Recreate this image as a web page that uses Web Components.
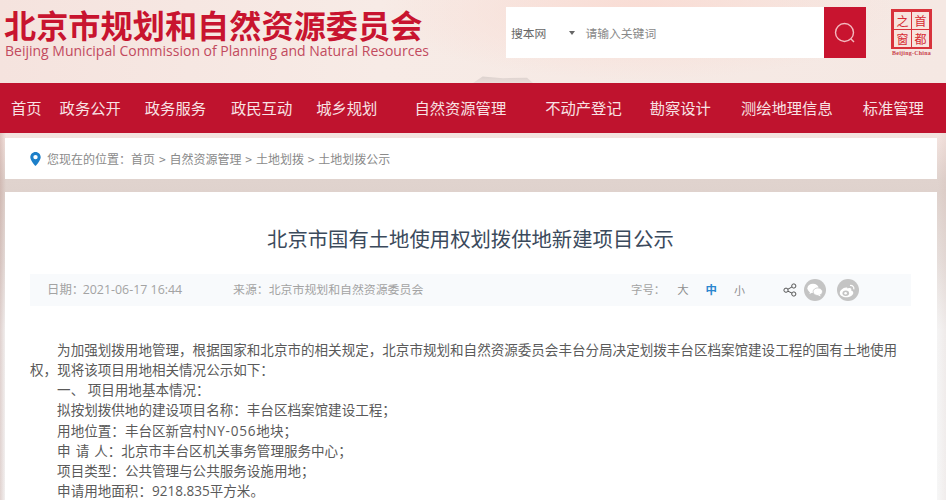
<!DOCTYPE html>
<html lang="zh">
<head>
<meta charset="utf-8">
<style>
html,body{margin:0;padding:0}
body{width:946px;height:500px;overflow:hidden;font-family:"Noto Sans CJK SC","Noto Sans",sans-serif;
background:
linear-gradient(90deg,rgba(170,120,110,.28),rgba(255,255,255,0) 6px,rgba(255,255,255,0) 938px,rgba(180,130,120,.08)),
linear-gradient(180deg,#f6e6e1 0,#f5e4df 80px,#f3e3df 136px,#e0d3ce 180px,#dfd2cd 192px,#e6dedb 260px,#f4f3f3 330px,#f6f6f6 500px)}
</style>
</head>
<body>
<template id="t-header">
<style>
:host{display:flex;height:83px;box-sizing:border-box;position:relative;overflow:hidden;
background:radial-gradient(ellipse 260px 70px at 640px 10px,#f9dcd4,rgba(249,220,212,0)),linear-gradient(90deg,#f5e3de,#f7ebe6 40%,#f5e8e3)}
.brand{width:506px;padding:8px 0 0 4px;box-sizing:border-box;flex:none}
.cn{font:700 32.2px/33px "Noto Sans CJK SC",sans-serif;color:#c8142f;white-space:nowrap}
.en{font:14px/18px "Open Sans",sans-serif;color:#c24a5e;margin:1px 0 0 1px;white-space:nowrap}
.slot{margin-top:7px;flex:none}
.logo{margin:9px 0 0 25px;flex:none;width:41px}
.hill{position:absolute;left:473px;top:75px;width:60px;height:8px;background:linear-gradient(180deg,#d8cfcb,#ebdeda);clip-path:polygon(0 100%,16% 20%,50% 40%,90% 35%,100% 100%)}
</style>
<div class="brand"><div class="cn">北京市规划和自然资源委员会</div><div class="en">Beijing Municipal Commission of Planning and Natural Resources</div></div>
<div class="slot"><slot name="search"></slot></div>
<div class="logo"><slot name="logo"></slot></div>
<div class="hill"></div>
</template>

<template id="t-search">
<style>
:host{display:flex;width:360px;height:51px;background:#fff;align-items:center;font:11.8px/1 "Noto Sans CJK SC",sans-serif;color:#777}
.sel{margin-left:5px;color:#666;flex:none}
.tri{width:0;height:0;border:3px solid transparent;border-top:4px solid #666;border-bottom:0;margin:0 10px 0 23px;flex:none}
.ph{flex:1;color:#888}
button{all:unset;width:42px;height:51px;background:#c8142f;display:flex;align-items:center;justify-content:center}
</style>
<span class="sel">搜本网</span><span class="tri"></span><span class="ph">请输入关键词</span>
<button aria-label="搜索"><svg width="24" height="24" viewBox="0 0 24 24" fill="none" stroke="#f3b9bf" stroke-width="1.4"><circle cx="11.500" cy="11.500" r="9"/><path d="M18 18l3 3"/></svg></button>
</template>

<template id="t-logo">
<style>
:host{display:flex;flex-direction:column;align-items:center;width:41px}
.box{width:41px;height:40px;box-sizing:border-box;border:2px solid #d8333c;display:grid;grid-template:1fr 1fr/1fr 1fr;gap:1px;background:#d8333c;padding:1px;flex:none}
.box span{background:#f7e4de;color:#d62a32;font:400 12px/17px "Noto Sans CJK SC",serif;text-align:center}
.t{font:700 6px/7px "Liberation Serif",serif;color:#c8404a;margin-top:1px;white-space:nowrap;letter-spacing:.22px}
</style>
<div class="box"><span>之</span><span>首</span><span>窗</span><span>都</span></div>
<div class="t">Beijing-China</div>
</template>

<template id="t-nav">
<style>
:host{display:flex;height:50px;background:#bf132e;align-items:center;box-sizing:border-box;padding-bottom:1px;font:15.3px/1 "Noto Sans CJK SC",sans-serif;color:#f8e2e4;white-space:nowrap}
</style>
<slot></slot>
</template>

<template id="t-crumb">
<style>
:host{display:flex;height:41px;background:#fff;margin:5px 9px 0 5px;align-items:center;padding-left:25px;box-sizing:border-box;font:12px/1 "Noto Sans CJK SC",sans-serif;color:#8a8a8a;white-space:pre;word-spacing:1.2px}
svg{margin-right:6px;flex:none}
</style>
<svg width="11" height="14" viewBox="0 0 11 14"><path fill-rule="evenodd" fill="#1c7fc9" d="M5.500 0C2.500 0 .3 2.300.3 5.200.3 8.600 5.500 14 5.500 14s5.200-5.400 5.200-8.800C10.700 2.300 8.500 0 5.500 0zm0 7.300a2.200 2.200 0 1 1 0-4.400 2.200 2.200 0 0 1 0 4.400z"/></svg>
<span><slot></slot></span>
</template>

<template id="t-article">
<style>
:host{display:block;height:308px;margin:13px 9px 0 5px;background:#fff;box-sizing:border-box;padding:30px 26px 0 25px;overflow:hidden}
h1{margin:0;font:400 20.35px/32px "Noto Sans CJK SC",sans-serif;color:#3b4a5c;text-align:center;white-space:nowrap}
.meta{height:32px;margin-top:20px;background:#f8fafc}
.body{margin-top:34px;width:870px;font:13.56px/20.15px "Open Sans","Noto Sans CJK SC",sans-serif;color:#5a5a5a}
</style>
<h1><slot name="title"></slot></h1>
<div class="meta"><slot name="meta"></slot></div>
<div class="body"><slot></slot></div>
</template>

<template id="t-meta">
<style>
:host{display:flex;height:32px;align-items:center;font:11.9px/1 "Open Sans","Noto Sans CJK SC",sans-serif;color:#a3a3a3;white-space:nowrap}
.p{font-family:"Noto Sans CJK TC",sans-serif;line-height:0}
.date{margin-left:17px;width:186px;font-size:12.4px}
.date .p{letter-spacing:-1.5px}
.src{width:398px}
.size{display:flex;align-items:center;font-size:11.4px}
.size b{font-weight:400;color:#8f8f8f}
.a{margin-left:12px}.m{margin-left:17px;color:#2a86cf!important;font-weight:700!important}.s{margin-left:17px;font-size:11px}
.share{display:flex;align-items:center;margin-left:37.5px}
.c{width:22px;height:22px;border-radius:50%;background:#c4c4c4;display:flex;align-items:center;justify-content:center}
</style>
<span class="date">日期<span class="p">：</span>2021-06-17 16:44</span>
<span class="src">来源<span class="p">：</span>北京市规划和自然资源委员会</span>
<span class="size"><span>字号<span class="p">：</span></span><b class="a">大</b><b class="m">中</b><b class="s">小</b></span>
<span class="share">
<svg width="14" height="14" viewBox="0 0 14 14" fill="none" stroke="#555" stroke-width="1" style="margin-right:7px"><circle cx="3" cy="7.200" r="2.100"/><circle cx="10.800" cy="3" r="2.100"/><circle cx="10.800" cy="11" r="2.100"/><path d="M4.900 6.200L8.900 4M4.900 8.200L8.900 10"/></svg>
<span class="c"><svg width="16" height="14" viewBox="0 0 16 14" fill="#fff"><ellipse cx="6" cy="5.300" rx="5.600" ry="4.600"/><ellipse cx="10.800" cy="8.700" rx="4.700" ry="3.800" stroke="#c4c4c4" stroke-width=".8"/><path d="M3 8.500L2.500 11l3-1.500zM13 11.500l.6 2-2.600-1.200z"/></svg></span>
<span class="c" style="margin-left:11px"><svg width="17" height="15" viewBox="0 0 17 15"><path fill="#fff" d="M7.200 4.500C3.800 4.700.8 7.500.8 10c0 2.600 3.100 4.300 6.500 4.300 3.700 0 7-2 7-4.500 0-1.700-1.800-2.100-2.100-2.300.5-1.400 0-2.400-1.600-2.400-.9 0-2.100.5-2.100.5.200-.8-.4-1.100-1.300-1.100z"/><ellipse cx="6.800" cy="10.200" rx="3.300" ry="2.700" fill="#c4c4c4"/><circle cx="6.600" cy="10.300" r="1.300" fill="#fff"/><path d="M11 2.500c2.500-.4 4.300 1.300 3.800 3.800" fill="none" stroke="#fff" stroke-width="1.200"/></svg></span>
</span>
</template>

<script>
function def(name,id){customElements.define(name,class extends HTMLElement{constructor(){super();this.attachShadow({mode:"open"}).appendChild(document.getElementById(id).content.cloneNode(true));}});}
def("site-header","t-header");def("site-search","t-search");def("site-logo","t-logo");def("site-nav","t-nav");def("bread-crumb","t-crumb");def("news-article","t-article");def("article-meta","t-meta");
customElements.define("nav-item",class extends HTMLElement{constructor(){super();this.attachShadow({mode:"open"}).innerHTML='<style>:host{display:block;flex:none;margin-left:var(--g)}</style><slot></slot>';}});
customElements.define("c-p",class extends HTMLElement{constructor(){super();this.attachShadow({mode:"open"}).innerHTML='<style>:host{display:inline;font-family:"Noto Sans CJK TC",sans-serif;line-height:0}</style><slot></slot>';}});
customElements.define("para-line",class extends HTMLElement{constructor(){super();this.attachShadow({mode:"open"}).innerHTML='<style>:host{display:block;text-indent:2em}</style><slot></slot>';}});
</script>

<site-header>
<site-search slot="search"></site-search>
<site-logo slot="logo"></site-logo>
</site-header>
<site-nav>
<nav-item style="--g:11px">首页</nav-item>
<nav-item style="--g:18px">政务公开</nav-item>
<nav-item style="--g:24px">政务服务</nav-item>
<nav-item style="--g:25px">政民互动</nav-item>
<nav-item style="--g:24px">城乡规划</nav-item>
<nav-item style="--g:37px">自然资源管理</nav-item>
<nav-item style="--g:39px">不动产登记</nav-item>
<nav-item style="--g:28px">勘察设计</nav-item>
<nav-item style="--g:30px">测绘地理信息</nav-item>
<nav-item style="--g:30px">标准管理</nav-item>
</site-nav>
<bread-crumb>您现在的位置<c-p>：</c-p>首页 &gt; 自然资源管理 &gt; 土地划拨 &gt; 土地划拨公示</bread-crumb>
<news-article>
<span slot="title">北京市国有土地使用权划拨供地新建项目公示</span>
<article-meta slot="meta"></article-meta>
<para-line>为加强划拨用地管理<c-p>，</c-p>根据国家和北京市的相关规定<c-p>，</c-p>北京市规划和自然资源委员会丰台分局决定划拨丰台区档案馆建设工程的国有土地使用权<c-p>，</c-p>现将该项目用地相关情况公示如下<c-p>：</c-p></para-line>
<para-line>一、 项目用地基本情况<c-p>：</c-p></para-line>
<para-line>拟按划拨供地的建设项目名称<c-p>：</c-p>丰台区档案馆建设工程<c-p>；</c-p></para-line>
<para-line>用地位置<c-p>：</c-p>丰台区新宫村<span style="letter-spacing:.8px">NY-056</span>地块<c-p>；</c-p></para-line>
<para-line style="word-spacing:1.5px">申 请 人<c-p>：</c-p>北京市丰台区机关事务管理服务中心<c-p>；</c-p></para-line>
<para-line>项目类型<c-p>：</c-p>公共管理与公共服务设施用地<c-p>；</c-p></para-line>
<para-line>申请用地面积<c-p>：</c-p>9218.835平方米。</para-line>
</news-article>
</body>
</html>
